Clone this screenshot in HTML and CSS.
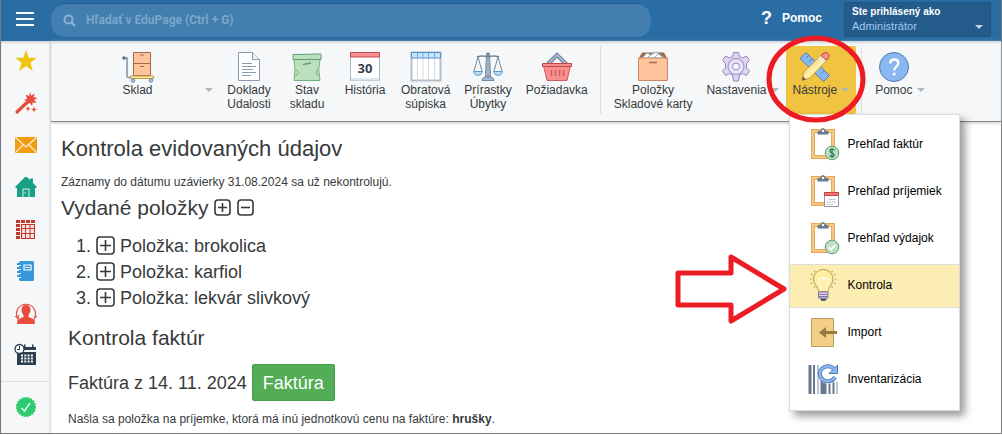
FILE: index.html
```html
<!DOCTYPE html>
<html lang="sk">
<head>
    <meta charset="utf-8" />
    <meta name="viewport" content="width=device-width, initial-scale=1" />
    <title>Kontrola evidovaných údajov</title>
    <link rel="stylesheet" href="styles.css">
</head>
<body>
    <div class="app">
        <header class="topbar">
            <button class="menu-toggle" type="button" aria-label="Menu">
                <svg width="18" height="14" viewBox="0 0 18 14" stroke="#fff" stroke-width="2"><path d="M0 1h18M0 7h18M0 13h18"/></svg>
            </button>
            <form class="search">
                <svg width="13" height="13" viewBox="0 0 13 13" fill="none" stroke="#8db3d2"><circle cx="5.5" cy="5.5" r="4" stroke-width="2"/><path d="M8.5 8.5l3.5 3.5" stroke-width="2.4"/></svg>
                <input type="search" aria-label="Hľadať" placeholder="Hľadať v EduPage (Ctrl + G)">
            </form>
            <a class="help-link" href="#"><span class="help-mark">?</span>Pomoc</a>
            <button class="account" type="button">
                <span class="account-text"><strong>Ste prihlásený ako</strong><span>Administrátor</span></span>
                <span class="caret caret-light"></span>
            </button>
        </header>

        <div class="workspace">
            <nav class="sidebar">
                <a href="#" aria-label="Obľúbené"><svg width="24" height="24" viewBox="0 0 24 24"><path fill="#f1c40f" d="M12 1l2.7 7.8H23l-6.6 5 2.4 8.2-6.8-4.8L5.2 22l2.4-8.2L1 8.800h8.300z"/></svg></a>
                <a href="#" aria-label="Nástroje"><svg width="24" height="24" viewBox="0 0 24 24"><path d="M3 21L14 10.500" stroke="#e74c3c" stroke-width="3.200" stroke-linecap="round"/><path fill="#e74c3c" d="M16 1l1.200 3.800L20.500 2.500l-.8 3.800 3.800.8-3.400 2 2.600 3-4-.7-.6 3.600-2.400-3.200-3 1.800 1-3.500-4-.8 3.500-1.900-1.700-3.700 3.600 1.300zM14 15l.8 1.900 1.900.8-1.900.8L14 20.500l-.8-2-2-.8 2-.8zM20 15.500l.8 2.200 2.200.8-2.200.8-.8 2.200-.8-2.200-2.200-.8 2.200-.8z"/></svg></a>
                <a href="#" aria-label="Správy"><svg width="24" height="24" viewBox="0 0 24 24"><path fill="#f39c12" d="M1 4h22v16H1z"/><path d="M1.500 4.500L12 14 22.500 4.500M1.500 19.500l7.500-7.500M22.500 19.500L15 12" fill="none" stroke="#fdebd0" stroke-width="1.200"/></svg></a>
                <a href="#" aria-label="Domov"><svg width="24" height="24" viewBox="0 0 24 24"><path fill="#16a085" d="M1.500 11.500L11 2h2l3 3V3.500h3V8l3.500 3.500V13H21v9H3v-9H1.500z"/><path d="M9 22v-8h6v8" fill="none" stroke="#d5f0ea"/><path d="M10.500 18h1.500" stroke="#d5f0ea"/></svg></a>
                <a href="#" aria-label="Rozvrh"><svg width="24" height="24" viewBox="0 0 24 24"><path fill="#c0392b" d="M2 3h4v3H2zM7 3h4v3H7zM12 3h4v3h-4zM17 3h4v3h-4zM2 7h4v3H2zM2 11h4v3H2zM2 15h4v3H2zM2 19h4v3H2zM7 7h14v15H7z"/><path fill="#f7e3e0" d="M8 8h3v3H8zM12 8h3.500v3H12zM16.500 8H20v3h-3.500zM8 12h3v4H8zM12 12h3.500v4H12zM16.500 12H20v4h-3.500zM8 17h3v4H8zM12 17h3.500v4H12zM16.500 17H20v4h-3.500z"/></svg></a>
                <a href="#" aria-label="Triedna kniha"><svg width="24" height="24" viewBox="0 0 24 24"><rect x="5" y="2" width="15" height="20" rx="1.500" fill="#3498db"/><path d="M3 5h4M3 9h4M3 13h4M3 17h4" stroke="#3498db" stroke-width="2"/><path d="M5 6.500h2M5 10.500h2M5 14.500h2M5 18.500h2" stroke="#e4f1fa"/><path d="M10 6h7v5h-7zM11.500 8.500h4" fill="none" stroke="#fff" stroke-width="1.200"/></svg></a>
                <a href="#" aria-label="Zastupovanie"><svg width="24" height="24" viewBox="0 0 24 24"><path fill="#e74c3c" d="M12 4c3 0 4.500 2 4.500 4.800 0 2.700-1.200 4.200-2 5.200v2l6 2.500.5 4.500H3l.5-4.500 6-2.500v-2c-.8-1-2-2.500-2-5.200C7.500 6 9 4 12 4z"/><path d="M3.500 17a9.500 9.500 0 1 1 17 0" fill="none" stroke="#e74c3c" stroke-width="1.200"/><path d="M1 15l3 3 1-4M23 15l-3 3" stroke="#e74c3c" fill="none"/></svg></a>
                <a href="#" aria-label="Kalendár"><svg width="24" height="24" viewBox="0 0 24 24"><path fill="#2c3e50" d="M4 4h18v3H4zM3 9h19v13H3zM10 1.500h1.500V5H10zM18 1.500h1.500V5H18z"/><circle cx="5.500" cy="6" r="4.500" fill="#fff" stroke="#2c3e50" stroke-width="1.300"/><path d="M5.500 3v3.500H3" fill="none" stroke="#2c3e50"/><path d="M7 12.500h12M7 15.500h12M7 18.500h12" stroke="#f5f7f9" stroke-width="2" stroke-dasharray="2 1.300"/></svg></a>
                <a class="sidebar-check" href="#" aria-label="Schválené"><svg width="24" height="24" viewBox="0 0 24 24"><circle cx="12" cy="12" r="9.300" fill="#2ecc71"/><circle cx="12" cy="12" r="9.300" fill="none" stroke="#2ecc71" stroke-width="1.500" stroke-dasharray="2 1"/><path d="M7.500 13l3 3 5.500-8" fill="none" stroke="#e0f8ea" stroke-width="1.500"/></svg></a>
            </nav>

            <div class="main">
                <div class="toolbar">
                    <button class="tool tool-wide" type="button">
                        <span class="tool-body">
                            <svg width="32" height="32" viewBox="0 0 32 32"><path d="M2 7h3v18.500q0 1 2 1h20" fill="none" stroke="#7f91a5" stroke-width="1.500"/><circle cx="2" cy="7" r="1.800" fill="#4e7290"/><path d="M11.500 1.500h17v11h-17zM11.500 12.500h17v12h-17z" fill="#ffc49c" stroke="#a16a4a"/><path d="M18 4h4M18 15.500h4" stroke="#a16a4a" stroke-width="1.200"/><path d="M8.500 25h23v2.500h-23z" fill="#ffeea3" stroke="#ba9b48"/><circle cx="11" cy="29.500" r="1.800" fill="#98ccfd" stroke="#788b9c"/><circle cx="29" cy="29.500" r="1.800" fill="#98ccfd" stroke="#788b9c"/></svg>
                            <span>Sklad</span>
                        </span>
                        <span class="caret"></span>
                    </button>
                    <button class="tool" type="button">
                        <span class="tool-body">
                            <svg width="32" height="32" viewBox="0 0 32 32"><path d="M5.500 1.500h14l7 7v21h-21z" fill="#fff" stroke="#8b9bad"/><path d="M19.500 1.500v7h7" fill="#eef2f6" stroke="#8b9bad"/><path d="M9 12.500h10M9 15.500h14M9 18.500h11M9 21.500h14M9 24.500h9" stroke="#8b9bad"/></svg>
                            <span>Doklady<br>Udalosti</span>
                        </span>
                    </button>
                    <button class="tool" type="button">
                        <span class="tool-body">
                            <svg width="32" height="32" viewBox="0 0 32 32"><path d="M3 8.500h26Q26.500 18 29 29.500H3Q5 18 3 8.500z" fill="#bae0bd" stroke="#6fb37a"/><path d="M2 3.500l28-.5v5.500H2z" fill="#bae0bd" stroke="#5e9c76"/><path d="M12 13.500l8-1.500" stroke="#5e9c76" stroke-width="1.500"/><path d="M4.500 18l3 3.500-3 4M28 17l-3 4 2.500 4" fill="none" stroke="#6fb37a"/></svg>
                            <span>Stav<br>skladu</span>
                        </span>
                    </button>
                    <button class="tool" type="button">
                        <span class="tool-body">
                            <svg width="32" height="32" viewBox="0 0 32 32"><path d="M1.500 1.500h29v28h-29z" fill="#fff" stroke="#a8b7c5"/><path d="M1.500 1.500h29v4.500h-29z" fill="#f78f8f" stroke="#c94b4b"/><path d="M2 27h28v2.500H2z" fill="#dce8f0"/><text class="calendar-day" x="16" y="22">30</text></svg>
                            <span>História</span>
                        </span>
                    </button>
                    <button class="tool" type="button">
                        <span class="tool-body">
                            <svg width="32" height="32" viewBox="0 0 32 32"><path d="M1.500 1.500h29v28h-29z" fill="#fff" stroke="#b5bfc9" stroke-width="2"/><path d="M7.500 7v22M13 7v22M18.500 7v22M24.500 7v22" stroke="#d3dbe2"/><path d="M1.500 1.500h29v5.500h-29z" fill="#c2e8ff" stroke="#568ccf"/><path d="M7.500 2v5M13 2v5M18.500 2v5M24.500 2v5" stroke="#75a8dc"/></svg>
                            <span>Obratová<br>súpiska</span>
                        </span>
                    </button>
                    <button class="tool" type="button">
                        <span class="tool-body">
                            <svg width="32" height="32" viewBox="0 0 32 32"><path d="M14.500 3.500h3l1 22h-5z" fill="#9db4c8" stroke="#72899e"/><path d="M10 29.500q0-3 3.500-3.500h5q3.500.5 3.500 3.500z" fill="#a8bccd" stroke="#72899e"/><path d="M5 6q5-2 11 0 6-2 11 0" fill="none" stroke="#72899e" stroke-width="1.500"/><circle cx="16" cy="3" r="1.800" fill="#72899e"/><path d="M6 6L2 20M6 6l4 14M26 6l-4 14M26 6l4 14" stroke="#72899e"/><path d="M1.500 20.500h9q-1 4-4.500 4t-4.500-4zM21.500 20.500h9q-1 4-4.500 4t-4.500-4z" fill="#b8e0fb" stroke="#6799c5"/></svg>
                            <span>Prírastky<br>Úbytky</span>
                        </span>
                    </button>
                    <button class="tool" type="button">
                        <span class="tool-body">
                            <svg width="32" height="32" viewBox="0 0 32 32"><path d="M7 13l9-9 9 9" fill="none" stroke="#66798f" stroke-width="4"/><path d="M7 13l9-9 9 9" fill="none" stroke="#a7bacb" stroke-width="2"/><path d="M2.500 15h27L26 29.500H6z" fill="#f78f8f" stroke="#d15c5c"/><path d="M1.500 12.500h29v3h-29z" fill="#f78f8f" stroke="#c74343"/><path d="M10.500 19v6M14.500 19v6M18.500 19v6M22.500 19v6" stroke="#d15c5c" stroke-width="1.500"/></svg>
                            <span>Požiadavka</span>
                        </span>
                    </button>
                    <span class="tool-separator"></span>
                    <button class="tool" type="button">
                        <span class="tool-body">
                            <svg width="32" height="32" viewBox="0 0 32 32"><path d="M2 7l3-5.500h22L30 7z" fill="#a16a4a"/><path d="M5 7l5-5 4 2 5-3 8 6z" fill="#fff" stroke="#8eaac1"/><path d="M11 6l5-4M17 7l4-4" stroke="#8eaac1"/><path d="M1.500 7h29v22.500h-29z" fill="#ffc49c" stroke="#c98b62"/><path d="M12 11.500h8" stroke="#a16a4a" stroke-width="1.500"/></svg>
                            <span>Položky<br>Skladové karty</span>
                        </span>
                    </button>
                    <button class="tool" type="button">
                        <span class="tool-body">
                            <svg width="32" height="32" viewBox="0 0 32 32"><path d="M13.500 1.500h5l1 4 3 1.500 4-2 3 4.500-3 3v4.500l3 3-3 4.500-4-2-3 1.500-1 6h-5l-1-6-3-1.500-4 2-3-4.500 3-3v-4.500l-3-3 3-4.500 4 2 3-1.500z" fill="#dcd5f2" stroke="#9b86bf"/><circle cx="16" cy="15.500" r="8" fill="#e8e2f8" stroke="#9b86bf"/><circle cx="16" cy="15.500" r="3.500" fill="#f5f7f9" stroke="#9b86bf"/></svg>
                            <span>Nastavenia</span>
                        </span>
                        <span class="caret"></span>
                    </button>
                    <div class="tool-menu">
                        <button class="tool tool-active" type="button" aria-expanded="true">
                            <span class="tool-body">
                                <svg width="32" height="32" viewBox="0 0 32 32"><path d="M7 1.500l23.500 23-6 6L1 7.500z" fill="#8bb7f0" stroke="#4e7ab5"/><path d="M9.500 4.500L7 7M13 8l-3 3M17 12l-2.500 2.500M21 16l-3 3M25 20l-2.500 2.500" stroke="#4e7ab5"/><path d="M3 29.500l2-8.500L24 2.500l5.500 5L11 27z" fill="#ffeea3" stroke="#ba9b48"/><path d="M22 4.500L25 2q2-1.500 4 .5t.5 4L27 9z" fill="#f78f8f" stroke="#c74343"/><path d="M20 6.500l5 5" stroke="#e8edf2" stroke-width="2.500"/><path d="M3 29.500l1-4 3 3z" fill="#6b5440"/><path d="M7 22L23 7" stroke="#f9d673"/></svg>
                                <span>Nástroje</span>
                            </span>
                            <span class="caret"></span>
                        </button>
                        <div class="dropdown">
                            <a class="dropdown-item" href="#">
                                <svg width="32" height="34" viewBox="0 0 32 34"><path d="M5 4h20v26H5z" fill="#fff" stroke="#df9f4b" stroke-width="4"/><path d="M5 4h20v26H5z" fill="none" stroke="#f5c782" stroke-width="2.600"/><path d="M9.500 7.500V4.500l3-1q.5-2.500 2.500-2.500t2.500 2.500l3 1v3z" fill="#66798f"/><circle cx="15" cy="4" r="1.200" fill="#fff"/><circle cx="24" cy="26" r="6.800" fill="#bae0bd" stroke="#5e9c76"/><path d="M26.500 23.500q-1-1.300-2.500-1.300-2 0-2 1.800 0 1.500 2 2t2.200 2q0 1.700-2.200 1.700-1.500 0-2.500-1.200M24 21v10" fill="none" stroke="#398257" stroke-width="1.300"/></svg>
                                <span>Prehľad faktúr</span>
                            </a>
                            <a class="dropdown-item" href="#">
                                <svg width="32" height="34" viewBox="0 0 32 34"><path d="M5 4h20v26H5z" fill="#fff" stroke="#df9f4b" stroke-width="4"/><path d="M5 4h20v26H5z" fill="none" stroke="#f5c782" stroke-width="2.600"/><path d="M9.500 7.500V4.500l3-1q.5-2.500 2.500-2.500t2.500 2.500l3 1v3z" fill="#66798f"/><circle cx="15" cy="4" r="1.200" fill="#fff"/><path d="M16.500 18.500h14v14h-14z" fill="#fff" stroke="#8796a8"/><path d="M16.500 18.500h14v3h-14z" fill="#f07878" stroke="#c74343"/><path d="M21 25.500h7M19 28h9M19 30.500h6" stroke="#a3b4c5" stroke-dasharray="1.500 .7"/></svg>
                                <span>Prehľad príjemiek</span>
                            </a>
                            <a class="dropdown-item" href="#">
                                <svg width="32" height="34" viewBox="0 0 32 34"><path d="M5 4h20v26H5z" fill="#fff" stroke="#df9f4b" stroke-width="4"/><path d="M5 4h20v26H5z" fill="none" stroke="#f5c782" stroke-width="2.600"/><path d="M9.500 7.500V4.500l3-1q.5-2.500 2.500-2.500t2.500 2.500l3 1v3z" fill="#66798f"/><circle cx="15" cy="4" r="1.200" fill="#fff"/><circle cx="24" cy="26" r="6.800" fill="#bae0bd" stroke="#5e9c76"/><path d="M20.500 26l2.500 2.500 4.500-4.500" fill="none" stroke="#fff" stroke-width="2"/></svg>
                                <span>Prehľad výdajok</span>
                            </a>
                            <a class="dropdown-item dropdown-item-selected" href="#">
                                <svg width="32" height="34" viewBox="0 0 32 34"><path d="M10.500 23.500q0-3-2.500-6t-2.500-6.500A9.700 9.500 0 0 1 25 11q0 3.500-2.500 6.500T20 23.500z" fill="#ffeea3" stroke="#ba9b48"/><path d="M13 23l-1-9q-2-4 1-4 2 0 1.500 3 .5-3 1.500-3t1.500 3q-.5-3 1.500-3 3 0 1 4l-1.500 9" fill="none" stroke="#fffbe0" stroke-width="1.500"/><path d="M10.500 24h9.500v6H10.500z" fill="#dcd5f2" stroke="#8b75a1"/><path d="M10.500 26.500H20M10.500 28.500H20" stroke="#8b75a1"/><path d="M12 30.500h7L17.500 33h-4z" fill="#4e5a78"/><path d="M2 11h1.500M3 6l1.500 1M3 16l1.500-1M27 11h1.500M26 7l1.500-1M26 15l1.500 1M6 3l1 1M24.500 3l-1 1M6 19.500l1-1M24.500 19.500l-1-1" stroke="#ba9b48" stroke-width="1.200"/></svg>
                                <span>Kontrola</span>
                            </a>
                            <a class="dropdown-item" href="#">
                                <svg width="32" height="34" viewBox="0 0 32 34"><path d="M3.500 3.500h22v28h-22z" fill="#f5ce85" stroke="#ba9b68"/><path d="M29 16H18v-4l-7 5.500 7 5.500v-4h11z" fill="#967a44"/></svg>
                                <span>Import</span>
                            </a>
                            <a class="dropdown-item" href="#">
                                <svg width="32" height="34" viewBox="0 0 32 34"><path d="M2 3v29M14 18v14M17 18v14" stroke="#66798f" stroke-width="3"/><path d="M6 3v29M21.500 20v12M25.500 20v12" stroke="#66798f" stroke-width="2"/><path d="M10 3v29M29 20v12" stroke="#a3b4c5" stroke-width="1.500"/><circle cx="20" cy="12" r="10" fill="#fff"/><path d="M26 7a8 7.500 0 1 0 1 8" fill="none" stroke="#4e7ab5" stroke-width="4"/><path d="M29.500 3v8.500H21z" fill="#8bb7f0" stroke="#4e7ab5"/><path d="M26 7a8 7.500 0 1 0 1 8" fill="none" stroke="#8bb7f0" stroke-width="2.300"/></svg>
                                <span>Inventarizácia</span>
                            </a>
                        </div>
                    </div>
                    <span class="tool-separator"></span>
                    <button class="tool" type="button">
                        <span class="tool-body">
                            <svg width="32" height="32" viewBox="0 0 32 32"><circle cx="16" cy="16" r="14.500" fill="#8bb7f0" stroke="#4e7ab5"/><path d="M12 12.500q.5-4 4.300-4 4 0 4 3.600 0 2-2 3.600-2 1.500-2 3.800" fill="none" stroke="#fff" stroke-width="2.300"/><circle cx="16.200" cy="23" r="1.500" fill="#fff"/></svg>
                            <span>Pomoc</span>
                        </span>
                        <span class="caret"></span>
                    </button>
                </div>

                <main class="content">
                    <h1>Kontrola evidovaných údajov</h1>
                    <p>Záznamy do dátumu uzávierky 31.08.2024 sa už nekontrolujú.</p>
                    <h2 class="section-title">Vydané položky
                        <button class="expander" type="button" aria-label="Rozbaliť všetko"><svg width="17" height="17" viewBox="0 0 17 17"><rect x="1" y="1" width="15" height="15" rx="3"/><path d="M4 8.500h9M8.500 4v9"/></svg></button>
                        <button class="expander" type="button" aria-label="Zbaliť všetko"><svg width="17" height="17" viewBox="0 0 17 17"><rect x="1" y="1" width="15" height="15" rx="3"/><path d="M4 8.500h9"/></svg></button>
                    </h2>
                    <ol class="item-list">
                        <li><button class="expander" type="button" aria-label="Rozbaliť"><svg width="19" height="19" viewBox="0 0 19 19"><rect x="1" y="1" width="17" height="17" rx="3"/><path d="M4 9.500h11M9.500 4v11"/></svg></button> Položka: brokolica</li>
                        <li><button class="expander" type="button" aria-label="Rozbaliť"><svg width="19" height="19" viewBox="0 0 19 19"><rect x="1" y="1" width="17" height="17" rx="3"/><path d="M4 9.500h11M9.500 4v11"/></svg></button> Položka: karfiol</li>
                        <li><button class="expander" type="button" aria-label="Rozbaliť"><svg width="19" height="19" viewBox="0 0 19 19"><rect x="1" y="1" width="17" height="17" rx="3"/><path d="M4 9.500h11M9.500 4v11"/></svg></button> Položka: lekvár slivkový</li>
                    </ol>
                    <section class="invoices">
                        <h2>Kontrola faktúr</h2>
                        <div class="invoice-row">
                            <span>Faktúra z 14. 11. 2024</span>
                            <button class="btn-success" type="button">Faktúra</button>
                        </div>
                        <p>Našla sa položka na príjemke, ktorá má inú jednotkovú cenu na faktúre: <strong>hrušky</strong>.</p>
                    </section>
                </main>
            </div>
        </div>
    </div>

    <!-- zvýraznenie postupu -->
    <svg class="annotation" width="1002" height="435" viewBox="0 0 1002 435" fill="none" stroke="#ed1c24" stroke-width="5" stroke-linejoin="round">
        <ellipse cx="816" cy="79" rx="47" ry="41"/>
        <path d="M678 273h53v-16l53 32-53 32v-16h-53z"/>
    </svg>
</body>
</html>
```
FILE: styles.css
```css
* {
    box-sizing: border-box;
}

body {
    margin: 0;
    font-family: "Liberation Sans", Arial, sans-serif;
    font-size: 12px;
    line-height: 16px;
    color: #373a3c;
    background: #fff;
}

h1,
h2,
p,
ol {
    margin: 0;
    padding: 0;
}

button {
    margin: 0;
    padding: 0;
    border: none;
    background: none;
    font: inherit;
    color: inherit;
    cursor: pointer;
}

a {
    color: inherit;
    text-decoration: none;
}

svg {
    display: block;
    flex: none;
}

.app {
    display: flex;
    flex-direction: column;
    min-height: calc(100vh - 1px);
    border: 1px solid #77797c;
    border-top: none;
}

/* horná lišta */
.topbar {
    display: flex;
    align-items: flex-start;
    height: 41px;
    padding-right: 10px;
    background: #2a6da4;
    color: #fff;
}

.menu-toggle {
    padding: 12px 17px 0 15px;
}

.search {
    display: flex;
    align-items: center;
    gap: 10px;
    flex: 0 1 600px;
    height: 34px;
    margin-top: 3px;
    padding-left: 12px;
    border-radius: 14px;
    background: #427eaf;
    box-shadow: inset 0 1px 1px #275f91;
}

.search input {
    flex: 1;
    min-width: 0;
    padding: 0;
    border: none;
    outline: none;
    background: none;
    color: #fff;
    font: bold 12px Roboto, "Liberation Sans", sans-serif;
}

.search input::placeholder {
    color: #7ba6c9;
    opacity: 1;
}

.help-link {
    display: flex;
    align-items: center;
    gap: 10px;
    margin: 10px 22px 0 auto;
    font-weight: bold;
}

.help-mark {
    font-size: 18px;
}

.account {
    display: flex;
    align-items: flex-end;
    justify-content: space-between;
    width: 147px;
    height: 35px;
    margin-top: 2px;
    padding: 3px 7px;
    border: 1px solid #1f5380;
    border-radius: 2px;
    background: #235b8a;
    text-align: left;
}

.account-text {
    display: flex;
    flex-direction: column;
    font-size: 11px;
    line-height: 14px;
    color: #a5c9f0;
}

.account-text strong {
    font-size: 10px;
    color: #fff;
}

.caret {
    border: 4px solid transparent;
    border-top-color: #b4b7ba;
    border-bottom: none;
}

.caret-light {
    margin-bottom: 4px;
    border-top-color: #c9d6e2;
}

.workspace {
    display: flex;
    flex: 1;
}

/* bočný panel */
.sidebar {
    display: flex;
    flex-direction: column;
    align-items: center;
    gap: 18px;
    flex: 0 0 50px;
    padding-top: 8px;
    background: #f5f7f9;
    border-right: 1px solid #dcdee0;
    box-shadow: inset 0 2px 2px #d5dade;
}

.sidebar-check {
    display: flex;
    justify-content: center;
    width: 100%;
    margin-top: -4px;
    padding-top: 13px;
    border-top: 1px solid #dcdee0;
}

.main {
    flex: 1;
    min-width: 0;
}

/* panel nástrojov */
.toolbar {
    display: flex;
    align-items: stretch;
    height: 81px;
    padding: 5px 0 7px 16px;
    background: #f5f7f9;
    border-bottom: 1px solid #85898c;
    box-shadow: inset 0 2px 2px #d5dade, 0 1px 3px #c5c7c9;
}

.tool {
    display: flex;
    align-items: flex-start;
    justify-content: center;
    gap: 4px;
    min-width: 58px;
    padding: 5px 7px 0;
    line-height: 14px;
    white-space: nowrap;
}

.tool-body {
    display: flex;
    flex-direction: column;
    align-items: center;
}

.tool-wide .tool-body {
    min-width: 127px;
}

.tool .caret {
    margin-top: 37px;
}

.tool-menu {
    display: flex;
    position: relative;
}

.tool-active {
    background: #f0c340;
    border-radius: 2px;
}

.tool-separator {
    width: 1px;
    margin: 0 6px 0 5px;
    background: #dcdee0;
}

.calendar-day {
    font: bold 13px "Noto Sans", sans-serif;
    text-anchor: middle;
    fill: #36404d;
}

.dropdown {
    display: flex;
    flex-direction: column;
    gap: 3px;
    position: absolute;
    top: 68px;
    left: 3px;
    z-index: 1;
    width: 171px;
    padding: 8px 0;
    border: 1px solid #d9dbdd;
    background: #fff;
    box-shadow: 5px 5px 8px rgba(0, 0, 0, 0.4);
    color: #000;
}

.dropdown-item {
    display: flex;
    align-items: center;
    gap: 8px;
    height: 44px;
    padding: 0 18px 2px;
    border: solid transparent;
    border-width: 1px 0;
    white-space: nowrap;
}

.dropdown-item-selected {
    border-color: #dcdcd8;
    background: #fcedb3;
}

/* obsah */
.content {
    padding: 14px 10px 6px;
}

.content h1,
.content h2 {
    font-size: 21px;
    font-weight: normal;
    line-height: 26px;
}

.content h1 {
    margin-bottom: 12px;
    font-size: 22px;
}

.content .section-title {
    margin: 5px 0 12px;
}

.expander {
    vertical-align: middle;
}

.expander svg {
    margin-bottom: 4px;
    fill: none;
    stroke: #373a3c;
    stroke-width: 1.6;
}

.item-list {
    padding-left: 35px;
    font-size: 18px;
    line-height: 26px;
}

.item-list li {
    height: 26px;
}

.invoices {
    padding: 14px 7px 0;
}

.invoice-row {
    display: flex;
    align-items: center;
    gap: 5px;
    margin: 13px 0 10px;
    font-size: 18px;
}

.btn-success {
    height: 37px;
    padding: 0 10px;
    border: 1px solid #449d48;
    border-radius: 2px;
    background: #52ad56;
    color: #fff;
}

.annotation {
    position: absolute;
    top: 0;
    left: 0;
    z-index: 2;
    pointer-events: none;
}
```
